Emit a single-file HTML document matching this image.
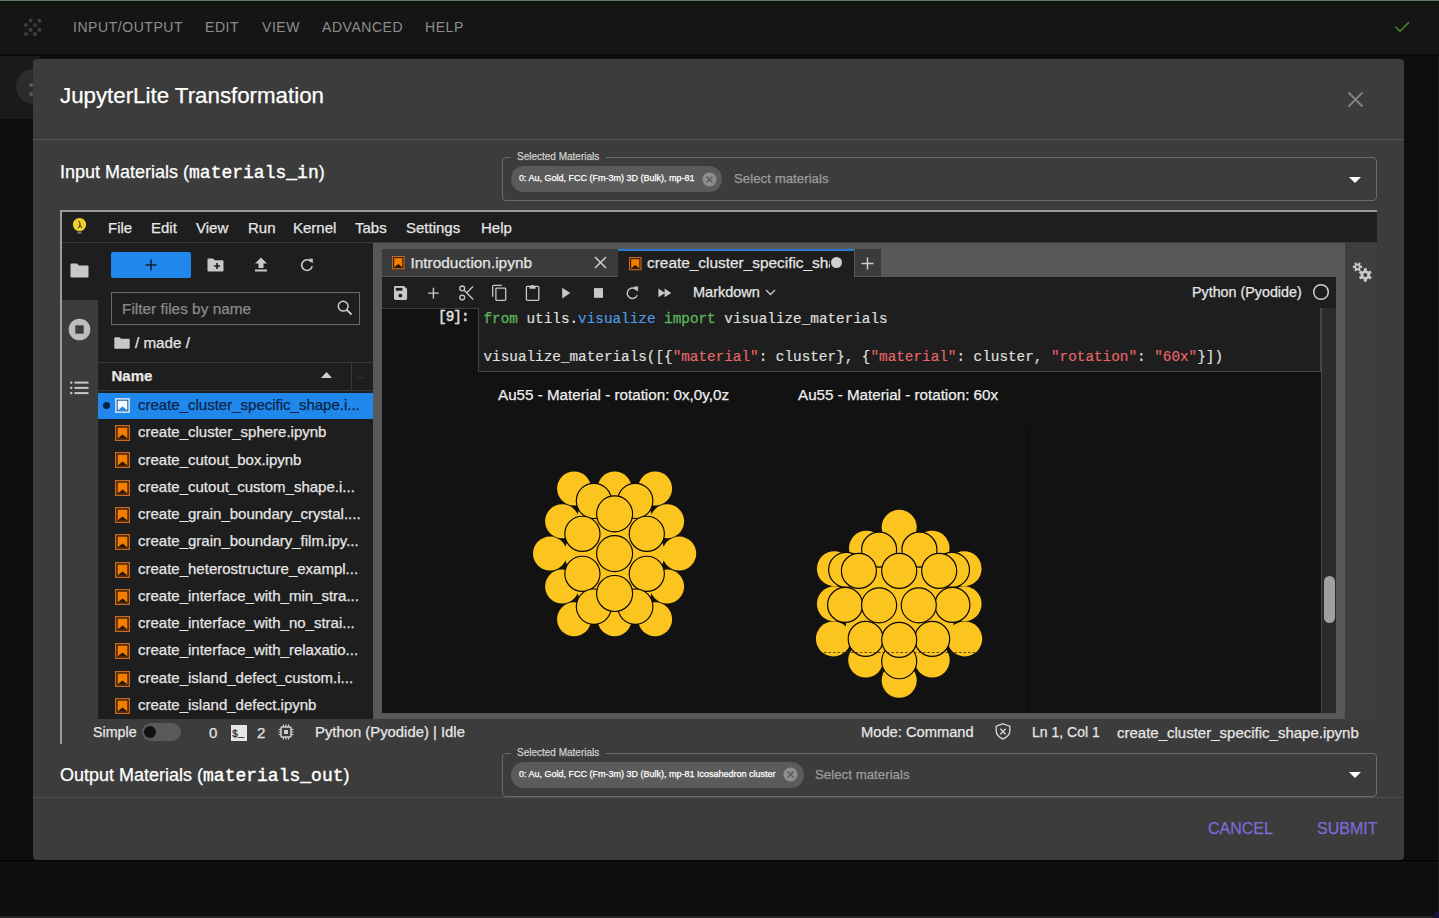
<!DOCTYPE html>
<html><head><meta charset="utf-8">
<style>
*{box-sizing:border-box;margin:0;padding:0}
html,body{width:1439px;height:918px;overflow:hidden;background:#0e0e0e;font-family:"Liberation Sans",sans-serif;color:#fff}
.a{position:absolute}
.t{position:absolute;white-space:nowrap;line-height:1;-webkit-text-stroke:0.25px currentColor}
svg{position:absolute;overflow:visible}
</style></head><body>
<!-- page header -->
<div class="a" style="left:0;top:0;width:1439px;height:54px;background:#151515;border-top:1px solid #667a6c"></div><div class="a" style="left:0;top:1px;width:1439px;height:3px;background:#0b150f"></div><div class="a" style="left:0;top:4px;width:1439px;height:4px;background:#181414"></div>
<div class="a" style="left:0;top:54px;width:1439px;height:2px;background:#0a0a0a"></div>
<div class="a" style="left:0;top:56px;width:40px;height:63px;background:#1a1a1a"></div>
<div class="a" style="left:16px;top:69px;width:35px;height:35px;border-radius:50%;background:#2c2c2c"></div><div class="a" style="left:28.5px;top:83px;width:4px;height:4px;border-radius:50%;background:#5a5a5a"></div><div class="a" style="left:28.5px;top:92px;width:4px;height:4px;border-radius:50%;background:#5a5a5a"></div>
<svg style="left:0;top:0" width="60" height="50" viewBox="0 0 60 50" fill="#3e3e3e"><circle cx="30.6" cy="20.5" r="2"/><circle cx="39.4" cy="20.7" r="2"/><circle cx="26" cy="25.1" r="2"/><circle cx="35" cy="25.1" r="2"/><rect x="28.7" y="27.9" width="3.8" height="3.8" rx="1"/><rect x="37.5" y="27.9" width="3.8" height="3.8" rx="1"/><circle cx="26" cy="34.1" r="2"/><rect x="33.1" y="32.2" width="3.8" height="3.8" rx="1"/></svg>
<div class="t" style="left:73px;top:20px;font-size:14px;letter-spacing:0.55px;color:#8d8d8d;-webkit-text-stroke:0">INPUT/OUTPUT</div>
<div class="t" style="left:205px;top:20px;font-size:14px;letter-spacing:0.55px;color:#8d8d8d;-webkit-text-stroke:0">EDIT</div>
<div class="t" style="left:262px;top:20px;font-size:14px;letter-spacing:0.55px;color:#8d8d8d;-webkit-text-stroke:0">VIEW</div>
<div class="t" style="left:322px;top:20px;font-size:14px;letter-spacing:0.55px;color:#8d8d8d;-webkit-text-stroke:0">ADVANCED</div>
<div class="t" style="left:425px;top:20px;font-size:14px;letter-spacing:0.55px;color:#8d8d8d;-webkit-text-stroke:0">HELP</div>
<svg style="left:1393px;top:19px" width="18" height="14" viewBox="0 0 18 14"><path d="M2.5 7.8 L6.9 12.2 L16 3.2" stroke="#4c8c30" stroke-width="1.5" fill="none"/></svg>

<!-- dialog -->
<div class="a" style="left:33px;top:59px;width:1371px;height:801px;background:#3c3c3c;border-radius:4px"></div>
<div class="a" style="left:0;top:860px;width:1439px;height:1.5px;background:#060606"></div><div class="a" style="left:0;top:861.5px;width:1439px;height:1px;background:#151515"></div><div class="a" style="left:0;top:916px;width:1439px;height:2px;background:#242424"></div><div class="a" style="left:1437.5px;top:56px;width:1.5px;height:862px;background:#1c1c1c"></div><div class="a" style="left:1433px;top:911px;width:14px;height:14px;border-radius:50%;background:#19123a"></div>
<div class="t" style="left:60px;top:85px;font-size:22.3px;color:#fff">JupyterLite Transformation</div>
<svg style="left:1347px;top:91px" width="17" height="17" viewBox="0 0 17 17"><path d="M1.5 1.5 L15.5 15.5 M15.5 1.5 L1.5 15.5" stroke="#838383" stroke-width="1.8"/></svg>
<div class="a" style="left:33px;top:139px;width:1371px;height:1px;background:#535353"></div>

<div class="t" style="left:60px;top:163px;font-size:18px;color:#fff">Input Materials (<span style="font-family:'Liberation Mono',monospace;font-size:18px;-webkit-text-stroke:0.4px #fff">materials_in</span>)</div>

<!-- top fieldset -->
<div class="a" style="left:502px;top:157px;width:875px;height:44px;border:1px solid #6b6b6b;border-radius:4px"></div>
<div class="a" style="left:511px;top:152px;width:95px;height:10px;background:#3c3c3c"></div>
<div class="t" style="left:517px;top:152px;font-size:10px;color:#cfcfcf">Selected Materials</div>
<div class="a" style="left:511px;top:166px;width:211px;height:26px;border-radius:13px;background:#5b5b5b"></div>
<div class="t" style="left:519px;top:174px;font-size:9px;color:#fff">0: Au, Gold, FCC (Fm-3m) 3D (Bulk), mp-81</div>
<svg style="left:702px;top:172px" width="15" height="15" viewBox="0 0 15 15"><circle cx="7.5" cy="7.5" r="7" fill="#8e8e8e"/><path d="M4.5 4.5 L10.5 10.5 M10.5 4.5 L4.5 10.5" stroke="#5b5b5b" stroke-width="1.4"/></svg>
<div class="t" style="left:734px;top:172px;font-size:13.3px;color:#9c9c9c">Select materials</div>
<svg style="left:1349px;top:177px" width="12" height="7" viewBox="0 0 12 7"><path d="M0 0 H12 L6 6 Z" fill="#fff"/></svg>

<!-- JUPYTER FRAME -->
<div id="jp" class="a" style="left:60px;top:210px;width:1317px;height:534px;background:#3c3c3c;border-top:2px solid #9b9b9b;border-left:2px solid #9b9b9b"></div>
<!-- menubar -->
<div class="a" style="left:62px;top:212px;width:1315px;height:30px;background:#1e1e1e"></div>
<div class="a" style="left:62px;top:242px;width:1315px;height:1px;background:#3a3a3a"></div>

<!-- left sidebar -->
<div class="a" style="left:62px;top:243px;width:36px;height:476px;background:#3c3c3c"></div>
<div class="a" style="left:62px;top:243px;width:36px;height:57px;background:#1e1e1e"></div>
<svg style="left:70px;top:263px" width="19" height="15" viewBox="0 0 19 15"><path d="M1.5 0.5 H7 L9 2.5 H17.5 Q18.5 2.5 18.5 3.5 V13.5 Q18.5 14.5 17.5 14.5 H1.5 Q0.5 14.5 0.5 13.5 V1.5 Q0.5 0.5 1.5 0.5Z" fill="#c8c8c8"/></svg>
<svg style="left:68px;top:318px" width="23" height="23" viewBox="0 0 23 23"><circle cx="11.5" cy="11.5" r="10.8" fill="#bdbdbd"/><rect x="7.3" y="7.3" width="8.4" height="8.4" fill="#3c3c3c"/></svg>
<svg style="left:70px;top:381px" width="19" height="14" viewBox="0 0 19 14" fill="#c8c8c8"><rect x="0" y="0.5" width="2.5" height="2.3" rx="1"/><rect x="4.5" y="0.6" width="14" height="2"/><rect x="0" y="5.8" width="2.5" height="2.3" rx="1"/><rect x="4.5" y="5.9" width="14" height="2"/><rect x="0" y="11" width="2.5" height="2.3" rx="1"/><rect x="4.5" y="11.1" width="14" height="2"/></svg>

<!-- file browser -->
<div class="a" style="left:98px;top:243px;width:275px;height:476px;background:#1e1e1e"></div>
<div class="a" style="left:111px;top:252px;width:80px;height:26px;background:#2088ec;border-radius:2px"></div>
<svg style="left:145px;top:259px" width="12" height="12" viewBox="0 0 12 12"><path d="M6 0.5 V11.5 M0.5 6 H11.5" stroke="#15212e" stroke-width="1.6"/></svg>
<svg style="left:207px;top:258px" width="17" height="14" viewBox="0 0 17 14"><path d="M1.3 0.5 H6 L7.8 2.3 H15.5 Q16.5 2.3 16.5 3.3 V12.5 Q16.5 13.5 15.5 13.5 H1.3 Q0.5 13.5 0.5 12.5 V1.3 Q0.5 0.5 1.3 0.5Z" fill="#c8c8c8"/><path d="M10 5 V11 M7 8 H13" stroke="#1e1e1e" stroke-width="1.6"/></svg>
<svg style="left:254px;top:257px" width="14" height="15" viewBox="0 0 14 15"><path d="M7 0.5 L13 6.5 H9.5 V11 H4.5 V6.5 H1 Z" fill="#c8c8c8"/><rect x="1" y="12.5" width="12" height="2" fill="#c8c8c8"/></svg>
<svg style="left:300px;top:258px" width="14" height="14" viewBox="0 0 14 14"><path d="M11.3 4 A5.3 5.3 0 1 0 12.2 8.2" stroke="#c8c8c8" stroke-width="1.6" fill="none"/><path d="M8.3 0.8 H12.8 V5.3 Z" fill="#c8c8c8"/></svg>
<div class="a" style="left:111px;top:292px;width:249px;height:33px;border:1px solid #6a6a6a"></div>
<div class="t" style="left:122px;top:301px;font-size:15.4px;color:#8a8a8a">Filter files by name</div>
<svg style="left:337px;top:300px" width="16" height="16" viewBox="0 0 16 16"><circle cx="6.2" cy="6.2" r="4.9" stroke="#cfcfcf" stroke-width="1.5" fill="none"/><path d="M9.8 9.8 L14.5 14.5" stroke="#cfcfcf" stroke-width="1.8"/></svg>
<svg style="left:114px;top:337px" width="16" height="12" viewBox="0 0 16 12"><path d="M1.2 0.3 H5.5 L7 1.8 H14.8 Q15.7 1.8 15.7 2.7 V11 Q15.7 11.8 14.8 11.8 H1.2 Q0.3 11.8 0.3 11 V1.2 Q0.3 0.3 1.2 0.3Z" fill="#c8c8c8"/></svg>
<div class="t" style="left:135px;top:335px;font-size:15.2px;color:#e6e6e6">/ made /</div>
<div class="a" style="left:98px;top:362px;width:275px;height:1px;background:#3a3a3a"></div>
<div class="t" style="left:111.5px;top:368px;font-size:15px;font-weight:bold;color:#e8e8e8">Name</div>
<svg style="left:321px;top:372px" width="11" height="6" viewBox="0 0 11 6"><path d="M0 6 L5.5 0 L11 6Z" fill="#d0d0d0"/></svg>
<div class="a" style="left:351px;top:363px;width:1px;height:27px;background:#3a3a3a"></div>
<div class="t" style="left:356px;top:371px;font-size:9px;color:#4a4a4a;letter-spacing:0.5px">...</div>
<div class="a" style="left:98px;top:390px;width:275px;height:1px;background:#3a3a3a"></div>
<div class="a" style="left:98px;top:393px;width:275px;height:26px;background:#2088ec"></div>
<div class="a" style="left:103.3px;top:402.1px;width:7px;height:7px;border-radius:50%;background:#0b2142"></div>
<svg style="left:115px;top:398px" width="15" height="15" viewBox="0 0 15 15"><rect x="0.9" y="0.9" width="13.2" height="13.2" fill="#0d3a6a" stroke="#b6dcff" stroke-width="1.8"/><rect x="2.6" y="2.6" width="9.8" height="9.8" fill="#f4f9ff"/><path d="M2.6 12.4 L7.5 8.6 L12.4 12.4 Z" fill="#2a86e0"/></svg>
<div class="t" style="left:138px;top:397px;font-size:15px;color:#0b2448">create_cluster_specific_shape.i...</div>
<svg style="left:115px;top:425.2px" width="15" height="16" viewBox="0 0 15 16"><rect x="0.65" y="0.65" width="13.7" height="14.7" fill="#2a1808" stroke="#c96a22" stroke-width="1.3"/><rect x="2.6" y="2.6" width="9.8" height="10.8" fill="#f57d00"/><path d="M2.6 13.4 L7.5 9.6 L12.4 13.4 Z" fill="#24160a"/></svg>
<div class="t" style="left:138px;top:424.4px;font-size:15px;color:#e6e6e6">create_cluster_sphere.ipynb</div>
<svg style="left:115px;top:452.4px" width="15" height="16" viewBox="0 0 15 16"><rect x="0.65" y="0.65" width="13.7" height="14.7" fill="#2a1808" stroke="#c96a22" stroke-width="1.3"/><rect x="2.6" y="2.6" width="9.8" height="10.8" fill="#f57d00"/><path d="M2.6 13.4 L7.5 9.6 L12.4 13.4 Z" fill="#24160a"/></svg>
<div class="t" style="left:138px;top:451.6px;font-size:15px;color:#e6e6e6">create_cutout_box.ipynb</div>
<svg style="left:115px;top:479.7px" width="15" height="16" viewBox="0 0 15 16"><rect x="0.65" y="0.65" width="13.7" height="14.7" fill="#2a1808" stroke="#c96a22" stroke-width="1.3"/><rect x="2.6" y="2.6" width="9.8" height="10.8" fill="#f57d00"/><path d="M2.6 13.4 L7.5 9.6 L12.4 13.4 Z" fill="#24160a"/></svg>
<div class="t" style="left:138px;top:478.9px;font-size:15px;color:#e6e6e6">create_cutout_custom_shape.i...</div>
<svg style="left:115px;top:507.0px" width="15" height="16" viewBox="0 0 15 16"><rect x="0.65" y="0.65" width="13.7" height="14.7" fill="#2a1808" stroke="#c96a22" stroke-width="1.3"/><rect x="2.6" y="2.6" width="9.8" height="10.8" fill="#f57d00"/><path d="M2.6 13.4 L7.5 9.6 L12.4 13.4 Z" fill="#24160a"/></svg>
<div class="t" style="left:138px;top:506.2px;font-size:15px;color:#e6e6e6">create_grain_boundary_crystal....</div>
<svg style="left:115px;top:534.2px" width="15" height="16" viewBox="0 0 15 16"><rect x="0.65" y="0.65" width="13.7" height="14.7" fill="#2a1808" stroke="#c96a22" stroke-width="1.3"/><rect x="2.6" y="2.6" width="9.8" height="10.8" fill="#f57d00"/><path d="M2.6 13.4 L7.5 9.6 L12.4 13.4 Z" fill="#24160a"/></svg>
<div class="t" style="left:138px;top:533.4px;font-size:15px;color:#e6e6e6">create_grain_boundary_film.ipy...</div>
<svg style="left:115px;top:561.5px" width="15" height="16" viewBox="0 0 15 16"><rect x="0.65" y="0.65" width="13.7" height="14.7" fill="#2a1808" stroke="#c96a22" stroke-width="1.3"/><rect x="2.6" y="2.6" width="9.8" height="10.8" fill="#f57d00"/><path d="M2.6 13.4 L7.5 9.6 L12.4 13.4 Z" fill="#24160a"/></svg>
<div class="t" style="left:138px;top:560.7px;font-size:15px;color:#e6e6e6">create_heterostructure_exampl...</div>
<svg style="left:115px;top:588.7px" width="15" height="16" viewBox="0 0 15 16"><rect x="0.65" y="0.65" width="13.7" height="14.7" fill="#2a1808" stroke="#c96a22" stroke-width="1.3"/><rect x="2.6" y="2.6" width="9.8" height="10.8" fill="#f57d00"/><path d="M2.6 13.4 L7.5 9.6 L12.4 13.4 Z" fill="#24160a"/></svg>
<div class="t" style="left:138px;top:587.9px;font-size:15px;color:#e6e6e6">create_interface_with_min_stra...</div>
<svg style="left:115px;top:616.0px" width="15" height="16" viewBox="0 0 15 16"><rect x="0.65" y="0.65" width="13.7" height="14.7" fill="#2a1808" stroke="#c96a22" stroke-width="1.3"/><rect x="2.6" y="2.6" width="9.8" height="10.8" fill="#f57d00"/><path d="M2.6 13.4 L7.5 9.6 L12.4 13.4 Z" fill="#24160a"/></svg>
<div class="t" style="left:138px;top:615.2px;font-size:15px;color:#e6e6e6">create_interface_with_no_strai...</div>
<svg style="left:115px;top:643.2px" width="15" height="16" viewBox="0 0 15 16"><rect x="0.65" y="0.65" width="13.7" height="14.7" fill="#2a1808" stroke="#c96a22" stroke-width="1.3"/><rect x="2.6" y="2.6" width="9.8" height="10.8" fill="#f57d00"/><path d="M2.6 13.4 L7.5 9.6 L12.4 13.4 Z" fill="#24160a"/></svg>
<div class="t" style="left:138px;top:642.4px;font-size:15px;color:#e6e6e6">create_interface_with_relaxatio...</div>
<svg style="left:115px;top:670.5px" width="15" height="16" viewBox="0 0 15 16"><rect x="0.65" y="0.65" width="13.7" height="14.7" fill="#2a1808" stroke="#c96a22" stroke-width="1.3"/><rect x="2.6" y="2.6" width="9.8" height="10.8" fill="#f57d00"/><path d="M2.6 13.4 L7.5 9.6 L12.4 13.4 Z" fill="#24160a"/></svg>
<div class="t" style="left:138px;top:669.7px;font-size:15px;color:#e6e6e6">create_island_defect_custom.i...</div>
<svg style="left:115px;top:697.7px" width="15" height="16" viewBox="0 0 15 16"><rect x="0.65" y="0.65" width="13.7" height="14.7" fill="#2a1808" stroke="#c96a22" stroke-width="1.3"/><rect x="2.6" y="2.6" width="9.8" height="10.8" fill="#f57d00"/><path d="M2.6 13.4 L7.5 9.6 L12.4 13.4 Z" fill="#24160a"/></svg>
<div class="t" style="left:138px;top:696.9px;font-size:15px;color:#e6e6e6">create_island_defect.ipynb</div>

<!-- menubar content -->
<svg style="left:72px;top:217px" width="15" height="18" viewBox="0 0 15 18"><circle cx="7.5" cy="7.5" r="6.6" fill="#f1cf2a"/><path d="M5.2 14.5 H9.8 L9.2 16.8 H5.8Z" fill="#777"/><path d="M6.2 4 Q8.5 4.5 8 8 Q7.8 10.5 5.8 11 M8 8 L9.8 11" stroke="#3a3000" stroke-width="1" fill="none"/></svg>
<div class="t" style="left:108px;top:220px;font-size:15px;color:#e6e6e6">File</div>
<div class="t" style="left:151px;top:220px;font-size:15px;color:#e6e6e6">Edit</div>
<div class="t" style="left:196px;top:220px;font-size:15px;color:#e6e6e6">View</div>
<div class="t" style="left:248px;top:220px;font-size:15px;color:#e6e6e6">Run</div>
<div class="t" style="left:293px;top:220px;font-size:15px;color:#e6e6e6">Kernel</div>
<div class="t" style="left:355px;top:220px;font-size:15px;color:#e6e6e6">Tabs</div>
<div class="t" style="left:406px;top:220px;font-size:15px;color:#e6e6e6">Settings</div>
<div class="t" style="left:481px;top:220px;font-size:15px;color:#e6e6e6">Help</div>

<!-- dock panel bg -->
<div class="a" style="left:373px;top:243px;width:972px;height:476px;background:#585858"></div>
<!-- tabs -->
<div class="a" style="left:382px;top:249px;width:236px;height:28px;background:#3b3b3b;border-bottom:1px solid #555"></div>
<svg style="left:392px;top:256px" width="12.5" height="13.3" viewBox="0 0 15 16"><rect x="0.65" y="0.65" width="13.7" height="14.7" fill="#2a1808" stroke="#c96a22" stroke-width="1.3"/><rect x="2.6" y="2.6" width="9.8" height="10.8" fill="#f57d00"/><path d="M2.6 13.4 L7.5 9.6 L12.4 13.4 Z" fill="#24160a"/></svg>
<div class="t" style="left:410.5px;top:254.5px;font-size:15.4px;color:#e6e6e6">Introduction.ipynb</div>
<svg style="left:594px;top:256px" width="13" height="13" viewBox="0 0 13 13"><path d="M1 1 L12 12 M12 1 L1 12" stroke="#cfcfcf" stroke-width="1.5"/></svg>
<div class="a" style="left:618px;top:249px;width:236px;height:29px;background:#1e1e1e;border-top:2px solid #2a7ad0"></div>
<svg style="left:628.5px;top:256.5px" width="12.5" height="13.3" viewBox="0 0 15 16"><rect x="0.65" y="0.65" width="13.7" height="14.7" fill="#2a1808" stroke="#c96a22" stroke-width="1.3"/><rect x="2.6" y="2.6" width="9.8" height="10.8" fill="#f57d00"/><path d="M2.6 13.4 L7.5 9.6 L12.4 13.4 Z" fill="#24160a"/></svg>
<div class="a" style="left:647px;top:254px;width:183px;height:18px;overflow:hidden"><div class="t" style="left:0;top:0.5px;font-size:15.4px;color:#e6e6e6">create_cluster_specific_shape.ipynb</div></div>
<div class="a" style="left:831px;top:257px;width:11px;height:11px;border-radius:50%;background:#cfcfcf"></div>
<div class="a" style="left:855px;top:249px;width:26px;height:28px;background:#3b3b3b;border-bottom:1px solid #555"></div>
<svg style="left:861px;top:257px" width="13" height="13" viewBox="0 0 13 13"><path d="M6.5 0.5 V12.5 M0.5 6.5 H12.5" stroke="#cfcfcf" stroke-width="1.5"/></svg>

<!-- notebook panel -->
<div class="a" style="left:382px;top:277px;width:954px;height:436px;background:#121212"></div>
<div class="a" style="left:382px;top:277px;width:954px;height:32px;background:#1e1e1e;border-bottom:1px solid #3e3e3e"></div>
<!-- toolbar icons -->
<svg style="left:0;top:0" width="1439" height="918" viewBox="0 0 1439 918">
<path d="M395.3 285.9 H404 L407.1 289 V298.6 Q407.1 299.9 405.8 299.9 H395.3 Q394 299.9 394 298.6 V287.2 Q394 285.9 395.3 285.9Z" fill="#c8c8c8"/>
<rect x="395.8" y="287.9" width="6.6" height="2.8" fill="#1e1e1e"/><circle cx="400.4" cy="295.6" r="1.9" fill="#1e1e1e"/>
<path d="M433.4 287.7 V298.5 M428 293.1 H438.8" stroke="#c8c8c8" stroke-width="1.4"/>
<circle cx="462.2" cy="288.4" r="2.4" stroke="#c8c8c8" stroke-width="1.3" fill="none"/>
<circle cx="462.2" cy="297.6" r="2.4" stroke="#c8c8c8" stroke-width="1.3" fill="none"/>
<path d="M464.2 290.2 L473.2 299.5 M466.2 293.2 L473 286.5" stroke="#c8c8c8" stroke-width="1.3"/>
<path d="M492.7 296.7 V286.3 Q492.7 285.4 493.6 285.4 H501.8" stroke="#c8c8c8" stroke-width="1.3" fill="none"/>
<rect x="495.9" y="288.2" width="9.8" height="12.2" rx="0.8" stroke="#c8c8c8" stroke-width="1.3" fill="none"/>
<rect x="526.4" y="286.3" width="12.4" height="14" rx="1" stroke="#c8c8c8" stroke-width="1.3" fill="none"/>
<path d="M529.4 288.8 V286.6 Q532.5 283.2 535.6 286.6 V288.8Z" fill="#c8c8c8"/>
<path d="M562.2 287.7 L570.3 293.1 L562.2 298.5Z" fill="#c8c8c8"/>
<rect x="594" y="288.1" width="9" height="9.7" fill="#c8c8c8"/>
<path d="M636.6 290.2 A5.2 5.2 0 1 0 637.2 295.2" stroke="#c8c8c8" stroke-width="1.4" fill="none"/>
<path d="M633.8 287.2 L637.8 286.8 L637.5 291 Z" fill="#c8c8c8" stroke="#c8c8c8" stroke-width="0.8"/>
<path d="M658.4 288.6 L665 292.9 L658.4 297.2Z M664.6 288.6 L671.2 292.9 L664.6 297.2Z" fill="#c8c8c8"/>
</svg>
<div class="t" style="left:693px;top:285px;font-size:14.5px;color:#e6e6e6">Markdown</div>
<svg style="left:765px;top:289px" width="11" height="7" viewBox="0 0 11 7"><path d="M1 1 L5.5 5.5 L10 1" stroke="#c8c8c8" stroke-width="1.4" fill="none"/></svg>
<div class="t" style="left:1192px;top:285px;font-size:14.3px;color:#e6e6e6">Python (Pyodide)</div>
<svg style="left:1312px;top:283px" width="18" height="18" viewBox="0 0 18 18"><circle cx="9" cy="9" r="7.3" stroke="#cfcfcf" stroke-width="1.5" fill="none"/></svg>

<!-- cell -->
<div class="t" style="left:438px;top:310px;font-size:14.3px;font-family:'Liberation Mono',monospace;color:#e0e0e0;letter-spacing:-0.9px;-webkit-text-stroke:0.5px #e0e0e0">[9]:</div>
<div class="a" style="left:478px;top:308px;width:843px;height:64px;background:#1e1e1e;border:1px solid #444;border-top:none"></div>
<div class="t" style="left:483.5px;top:310px;font-size:14.33px;font-family:'Liberation Mono',monospace;color:#e0e0e0;line-height:19.1px;-webkit-text-stroke:0.15px currentColor"><span style="color:#5ab55a;-webkit-text-stroke:0.3px #5ab55a">from</span> utils.<span style="color:#4d9ee6">visualize</span> <span style="color:#5ab55a;-webkit-text-stroke:0.3px #5ab55a">import</span> visualize_materials<br><br>visualize_materials([{<span style="color:#e6676a">"material"</span>: cluster}, {<span style="color:#e6676a">"material"</span>: cluster, <span style="color:#e6676a">"rotation"</span>: <span style="color:#e6676a">"60x"</span>}])</div>
<div class="t" style="left:498px;top:387px;font-size:15.2px;color:#eeeeee">Au55 - Material - rotation: 0x,0y,0z</div>
<div class="t" style="left:798px;top:387px;font-size:15.2px;color:#eeeeee">Au55 - Material - rotation: 60x</div>
<div class="a" style="left:1028px;top:428px;width:1px;height:285px;background:#0b0b0b"></div>
<!-- clusters -->
<svg style="left:0;top:0" width="1439" height="918" viewBox="0 0 1439 918"><polygon points="562.9,553.6 582.2,501.6 647.0,501.6 666.3,553.6 647.0,606.1 582.2,606.1" fill="#fcc41f"/><circle cx="574.1" cy="488.5" r="17" fill="#fcc41f"/><circle cx="614.6" cy="488.5" r="17" fill="#fcc41f"/><circle cx="655.1" cy="488.5" r="17" fill="#fcc41f"/><circle cx="562.1" cy="521.2" r="17" fill="#fcc41f"/><circle cx="667.1" cy="521.2" r="17" fill="#fcc41f"/><circle cx="550.0" cy="553.6" r="17" fill="#fcc41f"/><circle cx="679.2" cy="553.6" r="17" fill="#fcc41f"/><circle cx="562.1" cy="586.5" r="17" fill="#fcc41f"/><circle cx="667.1" cy="586.5" r="17" fill="#fcc41f"/><circle cx="574.1" cy="619.2" r="17" fill="#fcc41f"/><circle cx="614.6" cy="619.2" r="17" fill="#fcc41f"/><circle cx="655.1" cy="619.2" r="17" fill="#fcc41f"/><circle cx="593.9" cy="500.9" r="17.6" fill="#fcc41f" stroke="#050505" stroke-width="1.15"/><circle cx="635.3" cy="500.9" r="17.6" fill="#fcc41f" stroke="#050505" stroke-width="1.15"/><circle cx="582.4" cy="533.8" r="17.6" fill="#fcc41f" stroke="#050505" stroke-width="1.15"/><circle cx="646.8" cy="533.8" r="17.6" fill="#fcc41f" stroke="#050505" stroke-width="1.15"/><circle cx="582.4" cy="573.8" r="17.6" fill="#fcc41f" stroke="#050505" stroke-width="1.15"/><circle cx="646.8" cy="573.8" r="17.6" fill="#fcc41f" stroke="#050505" stroke-width="1.15"/><circle cx="593.9" cy="606.6" r="17.6" fill="#fcc41f" stroke="#050505" stroke-width="1.15"/><circle cx="635.3" cy="606.6" r="17.6" fill="#fcc41f" stroke="#050505" stroke-width="1.15"/><circle cx="614.6" cy="513.9" r="18" fill="#fcc41f" stroke="#050505" stroke-width="1.15"/><circle cx="614.6" cy="553.6" r="18" fill="#fcc41f" stroke="#050505" stroke-width="1.15"/><circle cx="614.6" cy="593.5" r="18" fill="#fcc41f" stroke="#050505" stroke-width="1.15"/><polygon points="845.9,633.7 846.7,576.2 899.8,542.2 926.7,559.3 953.1,576.2 953.6,633.7 926.9,651.1 899.8,667.7 872.4,651.1" fill="#fcc41f"/><circle cx="899.2" cy="680.3" r="17.5" fill="#fcc41f"/><circle cx="865.7" cy="660.1" r="17.5" fill="#fcc41f"/><circle cx="932.2" cy="660.1" r="17.5" fill="#fcc41f"/><circle cx="833.4" cy="638.9" r="17.5" fill="#fcc41f"/><circle cx="964.7" cy="638.9" r="17.5" fill="#fcc41f"/><circle cx="834.4" cy="603.8" r="17.5" fill="#fcc41f"/><circle cx="964.1" cy="603.8" r="17.5" fill="#fcc41f"/><circle cx="834.4" cy="568.7" r="17.5" fill="#fcc41f"/><circle cx="964.1" cy="568.7" r="17.5" fill="#fcc41f"/><circle cx="866.5" cy="548.2" r="17.5" fill="#fcc41f"/><circle cx="932.0" cy="548.2" r="17.5" fill="#fcc41f"/><circle cx="899.2" cy="527.3" r="17.5" fill="#fcc41f"/><circle cx="846.1" cy="569.8" r="17.5" fill="#fcc41f" stroke="#050505" stroke-width="1.15"/><circle cx="952.0" cy="569.8" r="17.5" fill="#fcc41f" stroke="#050505" stroke-width="1.15"/><circle cx="845.1" cy="604.9" r="17.5" fill="#fcc41f" stroke="#050505" stroke-width="1.15"/><circle cx="952.4" cy="604.9" r="17.5" fill="#fcc41f" stroke="#050505" stroke-width="1.15"/><circle cx="879.1" cy="549.6" r="17.5" fill="#fcc41f" stroke="#050505" stroke-width="1.15"/><circle cx="919.4" cy="549.6" r="17.5" fill="#fcc41f" stroke="#050505" stroke-width="1.15"/><circle cx="858.9" cy="570.9" r="17.5" fill="#fcc41f" stroke="#050505" stroke-width="1.15"/><circle cx="939.2" cy="570.9" r="17.5" fill="#fcc41f" stroke="#050505" stroke-width="1.15"/><circle cx="899.2" cy="570.9" r="17.5" fill="#fcc41f" stroke="#050505" stroke-width="1.15"/><circle cx="879.1" cy="605.3" r="17.5" fill="#fcc41f" stroke="#050505" stroke-width="1.15"/><circle cx="918.8" cy="605.3" r="17.5" fill="#fcc41f" stroke="#050505" stroke-width="1.15"/><circle cx="899.2" cy="661.2" r="17.5" fill="#fcc41f" stroke="#050505" stroke-width="1.15"/><circle cx="865.7" cy="638.9" r="17.5" fill="#fcc41f" stroke="#050505" stroke-width="1.15"/><circle cx="932.2" cy="638.9" r="17.5" fill="#fcc41f" stroke="#050505" stroke-width="1.15"/><circle cx="899.2" cy="639.9" r="17.5" fill="#fcc41f" stroke="#050505" stroke-width="1.15"/><path d="M824 652.5 H980" stroke="#3a2a00" stroke-width="0.8" stroke-dasharray="2.5 2"/></svg>
<!-- scrollbar -->
<div class="a" style="left:1321px;top:308px;width:15px;height:405px;background:#2b2b2b;border-left:1px solid #4a4a4a"></div>
<div class="a" style="left:1324px;top:576px;width:11px;height:47px;border-radius:5.5px;background:#a0a0a0"></div>

<!-- right sidebar -->
<div class="a" style="left:1345px;top:243px;width:32px;height:476px;background:#3e3e3e"></div>
<svg style="left:1340px;top:250px" width="40" height="40" viewBox="0 0 40 40"><path d="M20.63 15.85 L22.18 15.85 L22.18 17.95 L20.63 17.95 L19.98 19.08 L20.75 20.43 L18.94 21.48 L18.15 20.13 L16.85 20.13 L16.06 21.48 L14.25 20.43 L15.02 19.08 L14.37 17.95 L12.82 17.95 L12.82 15.85 L14.37 15.85 L15.02 14.72 L14.25 13.37 L16.06 12.32 L16.85 13.67 L18.15 13.67 L18.94 12.32 L20.75 13.37 L19.98 14.72Z" fill="#c8c8c8"/><circle cx="17.5" cy="16.9" r="1.3" fill="#3e3e3e"/><path d="M30.01 25.95 L31.79 27.03 L30.31 29.60 L28.47 28.60 L26.83 29.55 L26.78 31.64 L23.82 31.64 L23.77 29.55 L22.13 28.60 L20.29 29.60 L18.81 27.03 L20.59 25.95 L20.59 24.05 L18.81 22.97 L20.29 20.40 L22.13 21.40 L23.77 20.45 L23.82 18.36 L26.78 18.36 L26.83 20.45 L28.47 21.40 L30.31 20.40 L31.79 22.97 L30.01 24.05Z" fill="#c8c8c8"/><circle cx="25.3" cy="25" r="2.0" fill="#3e3e3e"/></svg>

<!-- status bar -->
<div class="a" style="left:62px;top:719px;width:1315px;height:25px;background:#3c3c3c"></div>
<div class="t" style="left:93px;top:725px;font-size:14.3px;color:#e6e6e6">Simple</div>
<div class="a" style="left:142px;top:723px;width:39px;height:18px;border-radius:9px;background:#595959"></div>
<div class="a" style="left:144px;top:726px;width:12px;height:12px;border-radius:50%;background:#111"></div>
<div class="t" style="left:209px;top:725px;font-size:15px;color:#e6e6e6">0</div>
<div class="a" style="left:230.5px;top:725px;width:16.5px;height:16px;background:#e6e6e6"></div>
<div class="t" style="left:232px;top:730px;font-size:10px;font-family:'Liberation Mono',monospace;color:#222">$_</div>
<div class="t" style="left:257px;top:725px;font-size:15px;color:#e6e6e6">2</div>
<svg style="left:278px;top:724px" width="16" height="16" viewBox="0 0 16 16"><rect x="3" y="3" width="10" height="10" rx="1" stroke="#d0d0d0" stroke-width="1.5" fill="none"/><rect x="6" y="6" width="4" height="4" fill="#d0d0d0"/><path d="M5.5 0.5 V3 M8 0.5 V3 M10.5 0.5 V3 M5.5 13 V15.5 M8 13 V15.5 M10.5 13 V15.5 M0.5 5.5 H3 M0.5 8 H3 M0.5 10.5 H3 M13 5.5 H15.5 M13 8 H15.5 M13 10.5 H15.5" stroke="#d0d0d0" stroke-width="1.2"/></svg>
<div class="t" style="left:315px;top:725px;font-size:14.85px;color:#e6e6e6">Python (Pyodide) | Idle</div>
<div class="t" style="left:861px;top:725px;font-size:14.7px;color:#e6e6e6">Mode: Command</div>
<svg style="left:995px;top:723px" width="16" height="17" viewBox="0 0 16 17"><path d="M8 0.8 L14.8 3.2 V8 Q14.8 13 8 16 Q1.2 13 1.2 8 V3.2Z" stroke="#d0d0d0" stroke-width="1.4" fill="none"/><path d="M5.3 5.8 L10.7 11.2 M10.7 5.8 L5.3 11.2" stroke="#d0d0d0" stroke-width="1.4"/></svg>
<div class="t" style="left:1032px;top:725px;font-size:14px;color:#e6e6e6">Ln 1, Col 1</div>
<div class="t" style="left:1117px;top:725px;font-size:15px;color:#e6e6e6">create_cluster_specific_shape.ipynb</div>

<!-- output materials -->
<div class="t" style="left:60px;top:766px;font-size:18px;color:#fff">Output Materials (<span style="font-family:'Liberation Mono',monospace;font-size:18px;-webkit-text-stroke:0.4px #fff">materials_out</span>)</div>
<div class="a" style="left:502px;top:753px;width:875px;height:44px;border:1px solid #6b6b6b;border-radius:4px"></div>
<div class="a" style="left:511px;top:748px;width:95px;height:10px;background:#3c3c3c"></div>
<div class="t" style="left:517px;top:748px;font-size:10px;color:#cfcfcf">Selected Materials</div>
<div class="a" style="left:511px;top:762px;width:293px;height:26px;border-radius:13px;background:#5b5b5b"></div>
<div class="t" style="left:519px;top:770px;font-size:9px;color:#fff">0: Au, Gold, FCC (Fm-3m) 3D (Bulk), mp-81 Icosahedron cluster</div>
<svg style="left:783px;top:767px" width="15" height="15" viewBox="0 0 15 15"><circle cx="7.5" cy="7.5" r="7" fill="#8e8e8e"/><path d="M4.5 4.5 L10.5 10.5 M10.5 4.5 L4.5 10.5" stroke="#5b5b5b" stroke-width="1.4"/></svg>
<div class="t" style="left:815px;top:768px;font-size:13.3px;color:#9c9c9c">Select materials</div>
<svg style="left:1349px;top:772px" width="12" height="7" viewBox="0 0 12 7"><path d="M0 0 H12 L6 6 Z" fill="#fff"/></svg>
<div class="a" style="left:33px;top:797px;width:1371px;height:1px;background:#4e4e4e"></div>
<div class="t" style="left:1208px;top:821px;font-size:16px;color:#7b6ad6">CANCEL</div>
<div class="t" style="left:1317px;top:821px;font-size:16px;color:#7b6ad6">SUBMIT</div>
</body></html>
